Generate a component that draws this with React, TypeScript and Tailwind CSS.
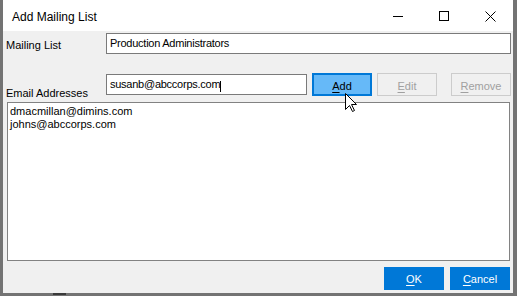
export default function App() {
  return (
    <div className="relative flex w-[517px] h-[296px] overflow-hidden bg-[#737373] pl-[3px] pr-[4px] pb-[3px] font-['Liberation_Sans',Arial,sans-serif] text-[11px] leading-[13px] text-black">
      <div className="flex h-[293px] w-[510px] flex-col">
        {/* Title bar */}
        <div className="flex h-[31px] bg-white">
          <div className="flex-1 pl-[9px] pt-[9px] text-[12px] leading-[16px] text-[#000]">Add Mailing List</div>
          <div className="flex w-[46px] justify-center pt-[16px]">
            <div className="h-px w-[10px] bg-black" />
          </div>
          <div className="flex w-[46px] justify-center pt-[11px]">
            <div className="h-[10px] w-[10px] border border-black" />
          </div>
          <div className="flex w-[46px] justify-center pt-[11px]">
            <svg width="11" height="11" viewBox="0 0 11 11">
              <path d="M0.5 0.5 L10.5 10.5 M10.5 0.5 L0.5 10.5" stroke="#000" strokeWidth="1" fill="none" />
            </svg>
          </div>
        </div>
        {/* Body */}
        <div className="flex flex-1 flex-col bg-[#f0f0f0] pl-[3px] pt-[2px]">
          <div className="flex h-[21px]">
            <div className="w-[100px] pt-[6px]">Mailing List</div>
            <div className="h-[21px] w-[405px] border border-[#7a7a7a] bg-white pl-[3px] pt-[3px] tracking-[-0.25px]">
              Production Administrators
            </div>
          </div>
          <div className="mt-[19px] flex h-[27px]">
            <div className="flex w-[100px] items-end">Email Addresses</div>
            <div className="mt-[1px] flex h-[21px] w-[201px] items-start border border-[#7a7a7a] bg-white pl-[3px] pt-[3px] tracking-[-0.25px]">
              <span>susanb@abccorps.com</span>
              <span className="mt-[3px] h-[11px] w-px bg-black" />
            </div>
            <div className="ml-[5px] flex h-[23px] w-[60px] items-center justify-center border-2 border-[#0078d7] bg-[#66b9f8] pt-[3px]">
              <span><span className="underline underline-offset-[2px]">A</span>dd</span>
            </div>
            <div className="ml-[5px] flex h-[23px] w-[60px] items-center justify-center border border-[#cccccc] bg-[#f0f0f0] pt-[3px] text-[#a0a0a0]">
              <span><span className="underline underline-offset-[2px]">E</span>dit</span>
            </div>
            <div className="ml-[14px] flex h-[23px] w-[60px] items-center justify-center border border-[#cccccc] bg-[#f0f0f0] pt-[3px] text-[#a0a0a0]">
              <span><span className="underline underline-offset-[2px]">R</span>emove</span>
            </div>
          </div>
          <div className="ml-[1px] mt-[2px] flex h-[159px] w-[503px] flex-col border border-[#828282] bg-white pl-[2px] pt-[2px]">
            <div>dmacmillan@dimins.com</div>
            <div>johns@abccorps.com</div>
          </div>
          <div className="mt-[6px] flex justify-end gap-[6px] pr-[3px]">
            <div className="flex h-[23px] w-[60px] items-center justify-center bg-[#0078d7] pt-[2px] text-white">
              <span><span className="underline underline-offset-[2px]">O</span>K</span>
            </div>
            <div className="flex h-[23px] w-[60px] items-center justify-center bg-[#0078d7] pt-[2px] text-white">
              <span><span className="underline underline-offset-[2px]">C</span>ancel</span>
            </div>
          </div>
        </div>
      </div>
      {/* mouse pointer */}
      <svg className="absolute left-[345px] top-[93px]" width="13" height="20" viewBox="0 0 13 20">
        <path d="M0.5 0.5 L0.5 16.5 L4.5 12.5 L7.5 18.5 L9.5 17.5 L6.5 11.5 L11.5 11.5 Z" fill="#fff" stroke="#000" strokeWidth="1" strokeLinejoin="miter" />
      </svg>
      <div className="absolute left-[53px] top-[293px] h-[2px] w-[13px] bg-[#3a3a3a]" />
    </div>
  );
}
